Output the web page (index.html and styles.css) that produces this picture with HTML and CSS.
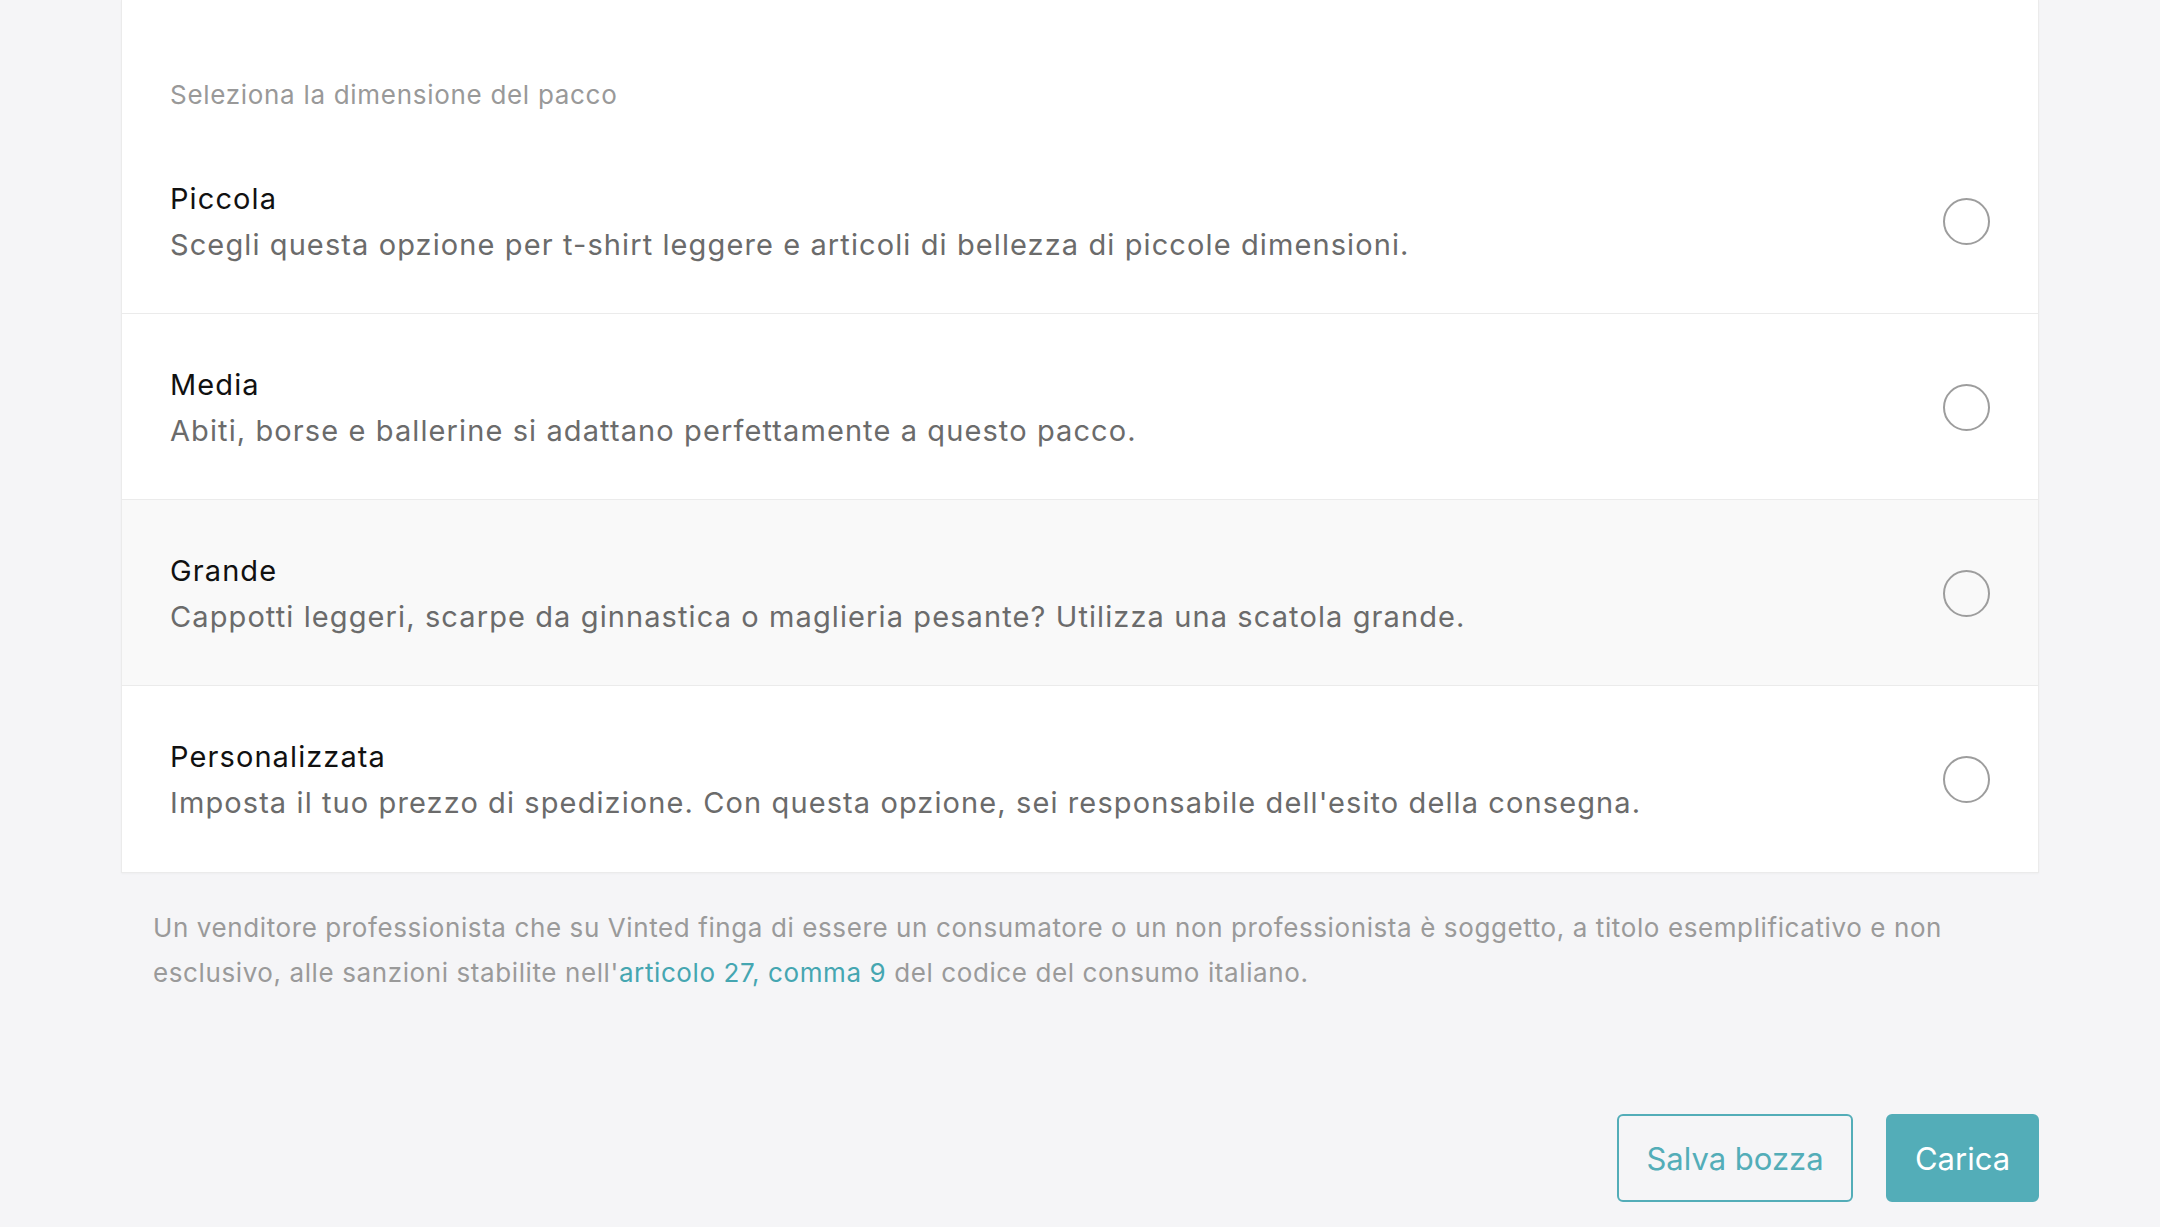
FILE: index.html
```html
<!DOCTYPE html>
<html lang="it">
<head>
<meta charset="utf-8">
<title>Dimensione del pacco</title>
<link rel="stylesheet" href="styles.css">
</head>
<body>
<main class="page">
  <section class="card">
    <div class="card-header">Seleziona la dimensione del pacco</div>
    <label class="option">
      <div class="option-text">
        <div class="option-title">Piccola</div>
        <div class="option-desc">Scegli questa opzione per t-shirt leggere e articoli di bellezza di piccole dimensioni.</div>
      </div>
      <span class="radio"></span>
    </label>
    <label class="option">
      <div class="option-text">
        <div class="option-title">Media</div>
        <div class="option-desc">Abiti, borse e ballerine si adattano perfettamente a questo pacco.</div>
      </div>
      <span class="radio"></span>
    </label>
    <label class="option option-hover">
      <div class="option-text">
        <div class="option-title">Grande</div>
        <div class="option-desc">Cappotti leggeri, scarpe da ginnastica o maglieria pesante? Utilizza una scatola grande.</div>
      </div>
      <span class="radio"></span>
    </label>
    <label class="option">
      <div class="option-text">
        <div class="option-title">Personalizzata</div>
        <div class="option-desc">Imposta il tuo prezzo di spedizione. Con questa opzione, sei responsabile dell'esito della consegna.</div>
      </div>
      <span class="radio"></span>
    </label>
  </section>
  <p class="legal">Un venditore professionista che su Vinted finga di essere un consumatore o un non professionista è soggetto, a titolo esemplificativo e non esclusivo, alle sanzioni stabilite nell'<a class="legal-link" href="#">articolo 27, comma 9</a> del codice del consumo italiano.</p>
  <div class="actions">
    <button class="btn btn-outline" type="button">Salva bozza</button>
    <button class="btn btn-filled" type="button">Carica</button>
  </div>
</main>
</body>
</html>
```

FILE: styles.css
```css
* {
  box-sizing: border-box;
}

html, body {
  margin: 0;
  padding: 0;
  background: #f5f5f7;
}

body {
  font-family: Inter, "Noto Sans", sans-serif;
  -webkit-font-smoothing: antialiased;
}

.page {
  width: 1918px;
  margin: 0 auto;
  display: flex;
  flex-direction: column;
}

.card {
  background: #ffffff;
  border-left: 1px solid #ebebeb;
  border-right: 1px solid #ebebeb;
  border-bottom: 1px solid #ebebeb;
  box-shadow: 0 1px 2px rgba(0, 0, 0, 0.03);
}

.card-header {
  padding: 72px 48px 10px 48px;
  font-size: 26px;
  letter-spacing: 0.7px;
  line-height: 46px;
  color: #999999;
}

.option {
  display: flex;
  align-items: center;
  justify-content: space-between;
  gap: 32px;
  padding: 48px 48px 45px 48px;
  border-bottom: 1px solid #ebebeb;
  cursor: pointer;
}

.option:last-child {
  border-bottom: none;
  padding-bottom: 46px;
}

.option-hover {
  background: #f9f9f9;
}

.option-text {
  display: flex;
  flex-direction: column;
}

.option-title {
  font-size: 29px;
  letter-spacing: 1.1px;
  line-height: 46px;
  color: #111111;
}

.option-desc {
  font-size: 29px;
  letter-spacing: 1.1px;
  line-height: 46px;
  color: #6b6b6b;
}

.radio {
  flex: 0 0 auto;
  width: 47px;
  height: 47px;
  margin-top: -2px;
  border: 2px solid #9d9d9d;
  border-radius: 50%;
  background: transparent;
}

.legal {
  margin: 0;
  padding: 32px 32px 0 32px;
  font-size: 26px;
  letter-spacing: 0.6px;
  line-height: 45px;
  color: #9a9a9a;
}

.legal-link {
  color: #45a6b1;
  text-decoration: none;
}

.actions {
  display: flex;
  justify-content: flex-end;
  gap: 33px;
  margin-top: 119px;
}

.btn {
  font-family: Inter, "Noto Sans", sans-serif;
  font-size: 31px;
  white-space: nowrap;
  height: 88px;
  border-radius: 6px;
  padding: 0;
  cursor: pointer;
}

.btn-outline {
  background: transparent;
  border: 2px solid #53adb8;
  color: #53adb8;
  width: 236px;
}

.btn-filled {
  background: #53adb8;
  border: 2px solid #53adb8;
  color: #ffffff;
  width: 153px;
}
```
